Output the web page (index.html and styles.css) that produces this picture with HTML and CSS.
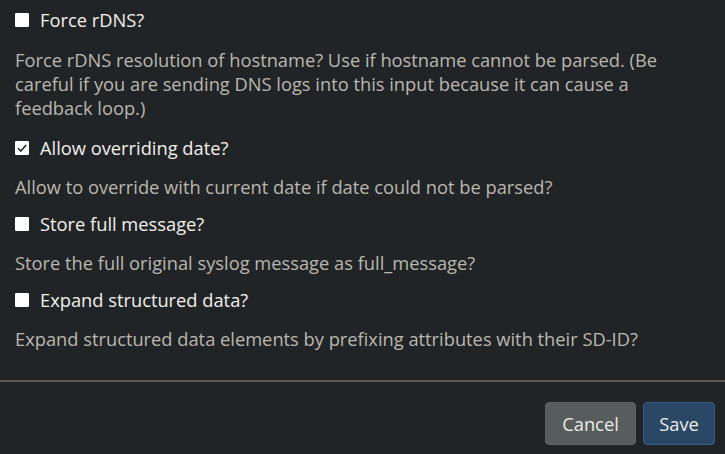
FILE: index.html
```html
<!DOCTYPE html>
<html>
<head>
<meta charset="utf-8">
<link rel="stylesheet" href="styles.css">
</head>
<body>
<div class="modal">
  <div class="body">
    <div class="field first">
      <label class="check"><span class="box"></span>Force rDNS?</label>
      <p class="help">Force rDNS resolution of hostname? Use if hostname cannot be parsed. (Be careful if you are sending DNS logs into this input because it can cause a feedback loop.)</p>
    </div>
    <div class="field">
      <label class="check"><span class="box checked"><svg viewBox="0 0 14 14" width="14" height="14"><path d="M3 7.2 L5.8 10 L11.2 4" fill="none" stroke="#2a2d30" stroke-width="1.6"/></svg></span>Allow overriding date?</label>
      <p class="help">Allow to override with current date if date could not be parsed?</p>
    </div>
    <div class="field">
      <label class="check"><span class="box"></span>Store full message?</label>
      <p class="help">Store the full original syslog message as full_message?</p>
    </div>
    <div class="field">
      <label class="check"><span class="box"></span>Expand structured data?</label>
      <p class="help">Expand structured data elements by prefixing attributes with their SD-ID?</p>
    </div>
  </div>
  <div class="footer">
    <button class="btn cancel">Cancel</button>
    <button class="btn save">Save</button>
  </div>
</div>
</body>
</html>
```
FILE: styles.css
```css
html, body {
  margin: 0;
  padding: 0;
  background: #212427;
  width: 725px;
  height: 454px;
  overflow: hidden;
}
body {
  font-family: "Open Sans", sans-serif;
  font-size: 18.3px;
  color: #ece8e0;
}
.modal {
  display: flex;
  flex-direction: column;
}
.body {
  padding: 8px 15px 29px 15px;
  border-bottom: 2px solid #5f584f;
  display: flex;
  flex-direction: column;
  gap: 13px;
}
.field {
  display: flex;
  flex-direction: column;
  gap: 15px;
}
.field.first {
  gap: 16px;
  margin-bottom: 3px;
}
.check {
  display: flex;
  align-items: center;
  gap: 11px;
  line-height: 24px;
  color: #f2efe9;
}
.box {
  width: 14px;
  height: 14px;
  background: #ffffff;
  border-radius: 1px;
  display: inline-flex;
  align-items: center;
  justify-content: center;
  flex: none;
}
.box svg {
  display: block;
}
.help {
  margin: 0;
  line-height: 24px;
  color: #bbb6ad;
}
.footer {
  display: flex;
  justify-content: flex-end;
  gap: 7px;
  padding: 20px 10px 9px 0;
}
.btn {
  font-family: "Open Sans", sans-serif;
  font-size: 18.3px;
  height: 43px;
  border-radius: 4px;
  padding: 0;
  color: #ecebe6;
}
.cancel {
  width: 91px;
  background: #575c5d;
  border: 1px solid #5d6263;
}
.save {
  width: 72px;
  background: #2a4865;
  border: 1px solid #355d85;
}
```
